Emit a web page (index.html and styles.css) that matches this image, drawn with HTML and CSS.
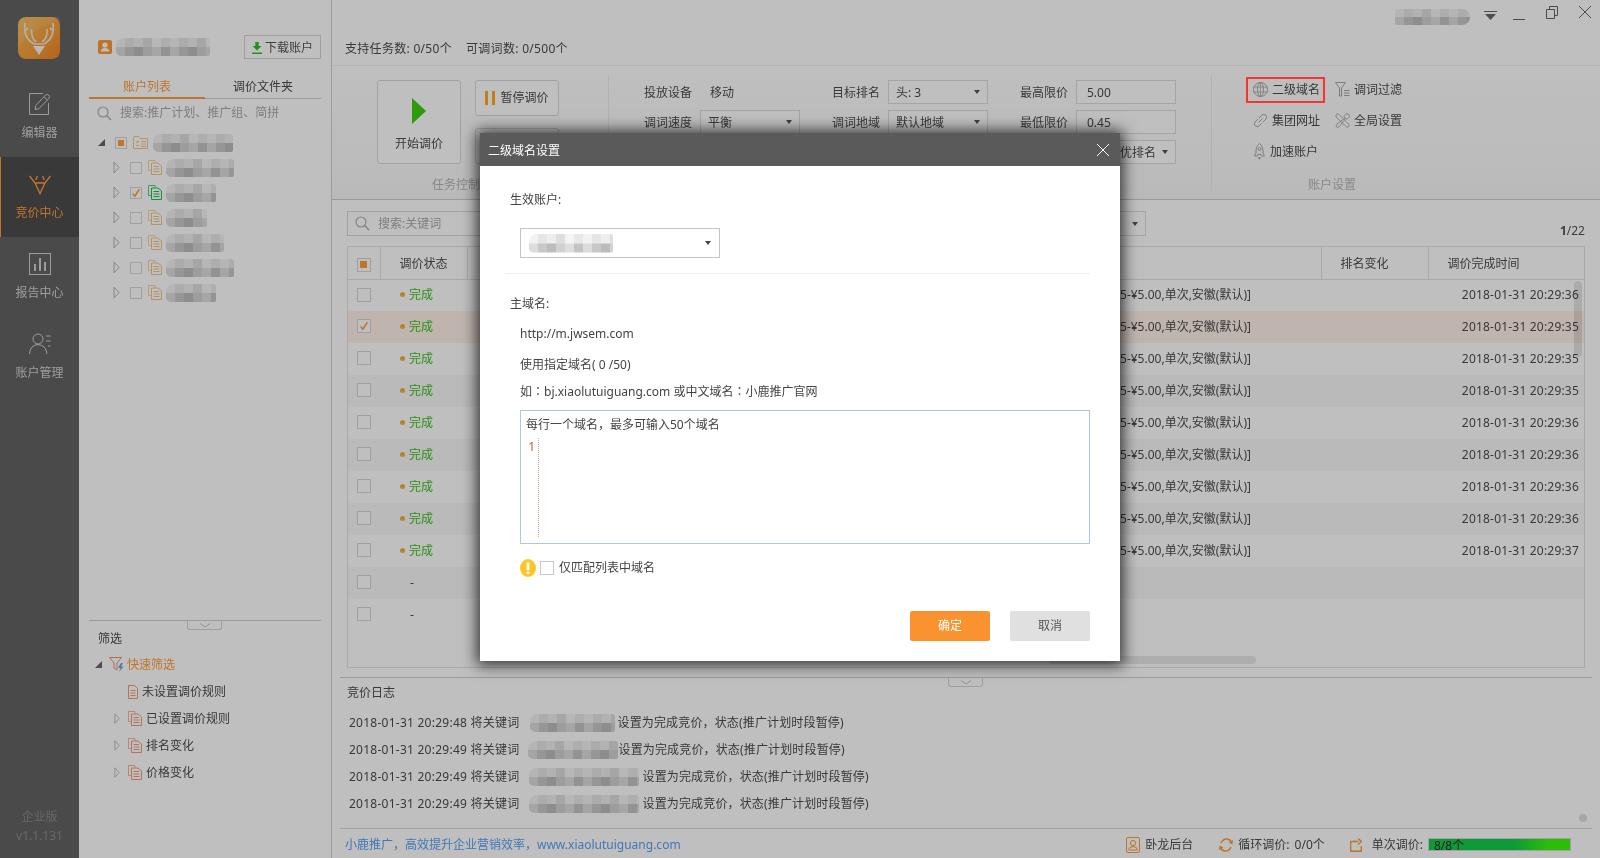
FILE: index.html
```html
<!DOCTYPE html>
<html lang="zh-CN">
<head>
<meta charset="utf-8">
<title>小鹿推广 - 竞价中心</title>
<link rel="stylesheet" href="styles.css">
</head>
<body>
<svg class="sprite" xmlns="http://www.w3.org/2000/svg">
  <symbol id="i-open" viewBox="0 0 7 13"><path d="M1 1 L6 6.5 L1 12 Z" fill="none" stroke="currentColor"/></symbol>
  <symbol id="i-corner" viewBox="0 0 8 8"><path d="M8 0 V8 H0 Z" fill="currentColor"/></symbol>
  <symbol id="i-docs" viewBox="0 0 14 15"><path d="M.5 .5 H7 V2.5 M.5 .5 V10.5 H3" fill="none" stroke="currentColor" opacity=".75"/><path d="M3.5 3 H10 L13.5 6 V14.5 H3.5 Z" fill="none" stroke="currentColor"/><path d="M5.5 6.5 H11 M5.5 9 H11.5 M5.5 11.5 H11.5" stroke="currentColor"/></symbol>
  <symbol id="i-doc" viewBox="0 0 10 14"><path d="M.5 .5 H6.5 L9.5 3.5 V13.5 H.5 Z" fill="none" stroke="currentColor"/><path d="M2.5 5.5 H7.5 M2.5 8 H7.5 M2.5 10.5 H7.5" stroke="currentColor"/></symbol>
  <symbol id="i-search" viewBox="0 0 15 15"><circle cx="6" cy="6" r="5" fill="none" stroke="currentColor" stroke-width="1.2"/><path d="M9.8 9.8 L14 14" stroke="currentColor" stroke-width="1.6"/></symbol>
  <symbol id="i-check" viewBox="0 0 12 12"><path d="M2 6.5 L4.6 9.8 L10 1.5" fill="none" stroke="currentColor" stroke-width="1.8"/></symbol>
</svg>

<div class="app">
  <aside class="rail">
    <svg class="logo" viewBox="0 0 42 42">
      <defs><linearGradient id="logo-g" x1="0" y1="0" x2="1" y2="1"><stop offset="0" stop-color="#f5bb52"/><stop offset=".55" stop-color="#f7a03c"/><stop offset="1" stop-color="#f38322"/></linearGradient></defs>
      <rect width="42" height="42" rx="8" fill="url(#logo-g)"/>
      <path d="M0 30 Q14 12 30 8 Q38 6 42 0 H8 Q0 0 0 8 Z" fill="#fff" opacity=".1"/>
      <path d="M7 6 Q5 21 16 27 M35 6 Q37 21 26 27 M13.5 12 Q13 21 18 25 M29 12 Q30 21 24 25 M16 27 H26 M6.5 14 L10 11 M35.5 14 L32 11" fill="none" stroke="#efe8dc" stroke-width="1.7"/>
      <path d="M15 29 H27 L21 38 Z" fill="#f8f5f0"/>
    </svg>
    <nav class="rail-nav">
      <a class="rail-item">
        <svg class="rail-icon" viewBox="0 0 22 22"><path d="M14 .5 H.5 V21.5 H19.5 V10" fill="none" stroke="currentColor"/><path d="M6 16.5 L6.8 12.5 L16.5 2 Q18 .6 19.8 2.2 Q21.2 3.8 20 5.3 L10 15.6 Z M15 3.8 L18.5 7" fill="none" stroke="currentColor"/></svg>
        <span>编辑器</span>
      </a>
      <a class="rail-item is-active">
        <svg class="rail-icon" viewBox="0 0 22 22"><path d="M.5 3 L6 10 H16 L21.5 3 M8.3 3 L6.8 7 M13.7 3 L15.2 7 M6 10 L11 20.5 L16 10" fill="none" stroke="currentColor" stroke-width="1.4"/></svg>
        <span>竞价中心</span>
      </a>
      <a class="rail-item">
        <svg class="rail-icon" viewBox="0 0 22 22"><rect x=".5" y=".5" width="21" height="21" fill="none" stroke="currentColor"/><path d="M6 11 V18 M11 5 V18 M16 9 V18" stroke="currentColor" stroke-width="2"/></svg>
        <span>报告中心</span>
      </a>
      <a class="rail-item">
        <svg class="rail-icon" viewBox="0 0 22 22"><circle cx="9" cy="6" r="5" fill="none" stroke="currentColor"/><path d="M.5 21 Q1 12 9 11.5 Q17 12 18 21" fill="none" stroke="currentColor"/><path d="M17 3 H21.5 M17 8 H21.5 M19 13 H21.5" stroke="currentColor"/></svg>
        <span>账户管理</span>
      </a>
    </nav>
    <div class="rail-version"><div>企业版</div><div>v1.1.131</div></div>
  </aside>

  <section class="accounts">
    <div class="acct-head">
      <svg class="acct-icon" viewBox="0 0 14 14"><rect width="14" height="14" rx="2" fill="#ff9a35"/><circle cx="7" cy="5" r="2.6" fill="#fff"/><path d="M2.5 11.5 Q3 8 7 8 Q11 8 11.5 11.5 Z" fill="#fff"/></svg>
      <span class="mosaic m-acct"></span>
      <button class="btn-download"><svg class="dl-icon" viewBox="0 0 10 12"><path d="M3.3 0 H6.7 V4 H9.5 L5 8.5 L.5 4 H3.3 Z M0 10.5 H10 V12 H0 Z" fill="#2cc22c"/></svg>下载账户</button>
    </div>
    <div class="tabs">
      <span class="tab is-active">账户列表</span>
      <span class="tab">调价文件夹</span>
    </div>
    <div class="acct-search">
      <svg class="search-icon"><use href="#i-search"/></svg>
      <span>搜索:推广计划、推广组、简拼</span>
    </div>
    <ul class="tree">
      <li class="tree-row root">
        <svg class="arrow-solid"><use href="#i-corner"/></svg>
        <span class="cb partial"></span>
        <svg class="folder" viewBox="0 0 15 13"><path d="M.5 2.5 V12.5 H14.5 V2.5 H7 L5.5 .5 H1 Z" fill="none" stroke="currentColor"/><circle cx="4.5" cy="6" r="1.2" fill="currentColor"/><path d="M2.5 10 Q4.5 7.5 6.5 10 Z" fill="currentColor"/><path d="M8 5.5 H13 M8 8 H13 M8 10.5 H13" stroke="currentColor"/></svg>
        <span class="mosaic m-root"></span>
      </li>
      <li class="tree-row"><svg class="arrow"><use href="#i-open"/></svg><span class="cb"></span><svg class="docs"><use href="#i-docs"/></svg><span class="mosaic m-t1"></span></li>
      <li class="tree-row"><svg class="arrow"><use href="#i-open"/></svg><span class="cb is-checked"><svg><use href="#i-check"/></svg></span><svg class="docs is-green"><use href="#i-docs"/></svg><span class="mosaic m-t2"></span></li>
      <li class="tree-row"><svg class="arrow"><use href="#i-open"/></svg><span class="cb"></span><svg class="docs"><use href="#i-docs"/></svg><span class="mosaic m-t3"></span></li>
      <li class="tree-row"><svg class="arrow"><use href="#i-open"/></svg><span class="cb"></span><svg class="docs"><use href="#i-docs"/></svg><span class="mosaic m-t4"></span></li>
      <li class="tree-row"><svg class="arrow"><use href="#i-open"/></svg><span class="cb"></span><svg class="docs"><use href="#i-docs"/></svg><span class="mosaic m-t1"></span></li>
      <li class="tree-row"><svg class="arrow"><use href="#i-open"/></svg><span class="cb"></span><svg class="docs"><use href="#i-docs"/></svg><span class="mosaic m-t2"></span></li>
    </ul>
    <div class="filter">
      <span class="handle handle-filter"><svg viewBox="0 0 12 5"><path d="M1 .5 L6 4 L11 .5" fill="none" stroke="currentColor"/></svg></span>
      <div class="filter-title">筛选</div>
      <div class="filter-row quick">
        <svg class="arrow-solid"><use href="#i-corner"/></svg>
        <svg class="funnel" viewBox="0 0 15 15"><path d="M.5 .5 H12.5 L8 6 V13 L5 11 V6 Z" fill="none" stroke="#ef8e6c"/><path d="M12 6 L9 11 H11.5 L10 15 L14.5 9.5 H12 L14 6 Z" fill="#6d9be6"/></svg>
        <span>快速筛选</span>
      </div>
      <div class="filter-row leaf"><svg class="doc"><use href="#i-doc"/></svg><span>未设置调价规则</span></div>
      <div class="filter-row branch"><svg class="arrow"><use href="#i-open"/></svg><svg class="docs"><use href="#i-docs"/></svg><span>已设置调价规则</span></div>
      <div class="filter-row branch"><svg class="arrow"><use href="#i-open"/></svg><svg class="docs"><use href="#i-docs"/></svg><span>排名变化</span></div>
      <div class="filter-row branch"><svg class="arrow"><use href="#i-open"/></svg><svg class="docs"><use href="#i-docs"/></svg><span>价格变化</span></div>
    </div>
  </section>

  <main class="main">
    <header class="topbar">
      <div class="winbar">
        <span class="mosaic m-win"></span>
        <svg class="win-drop" viewBox="0 0 13 24"><path d="M0 11.5 H13" stroke="currentColor"/><path d="M1 14 H12 L6.5 20 Z" fill="currentColor"/></svg>
        <svg class="win-min" viewBox="0 0 12 24"><path d="M0 19.5 H12" stroke="currentColor"/></svg>
        <svg class="win-max" viewBox="0 0 12 24"><path d="M.5 9.5 H8.5 V18.5 H.5 Z M3.5 9 V6.5 H11.5 V15.5 H9" fill="none" stroke="currentColor"/></svg>
        <svg class="win-close" viewBox="0 0 14 24"><path d="M1 6 L13 18 M13 6 L1 18" stroke="currentColor"/></svg>
      </div>
      <div class="stats"><span>支持任务数: 0/50个</span><span>可调词数: 0/500个</span></div>
    </header>

    <div class="toolbar">
      <div class="tool-group task">
        <div class="task-buttons">
          <button class="btn-start"><svg viewBox="0 0 14 26"><path d="M0 0 L14 13 L0 26 Z" fill="#3cd10f"/></svg><span>开始调价</span></button>
          <div class="task-side">
            <button class="btn-side"><svg viewBox="0 0 10 14"><path d="M0 0 H3 V14 H0 Z M7 0 H10 V14 H7 Z" fill="#ffa91f"/></svg><span>暂停调价</span></button>
            <button class="btn-side"></button>
          </div>
        </div>
        <div class="group-label task-label">任务控制</div>
      </div>

      <div class="tool-group params">
        <span class="p-label">投放设备</span><span class="p-value">移动</span>
        <span class="p-label">目标排名</span><span class="select">头: 3</span>
        <span class="p-label">最高限价</span><span class="field">5.00</span>
        <span class="p-label">调词速度</span><span class="select">平衡</span>
        <span class="p-label">调词地域</span><span class="select">默认地域</span>
        <span class="p-label">最低限价</span><span class="field">0.45</span>
        <span class="p-label"></span><span class="select"></span>
        <span class="p-label"></span><span class="select"></span>
        <span class="p-label"></span><span class="select">出价最优排名</span>
      </div>

      <div class="tool-group settings">
        <div class="settings-grid">
          <a class="set-item"><svg viewBox="0 0 15 15"><circle cx="7.5" cy="7.5" r="7" fill="none" stroke="currentColor"/><ellipse cx="7.5" cy="7.5" rx="3" ry="7" fill="none" stroke="currentColor"/><path d="M.5 5 H14.5 M.5 10 H14.5 M7.5 .5 V14.5" stroke="currentColor" stroke-width=".8"/></svg><span>二级域名</span></a>
          <a class="set-item"><svg viewBox="0 0 15 15"><path d="M.5 .5 H10.5 L6.5 6 V14 H4.5 V6 Z" fill="none" stroke="currentColor"/><path d="M9 8.5 H14.5 M9 11 H14.5 M9 13.5 H14.5" stroke="currentColor"/></svg><span>调词过滤</span></a>
          <a class="set-item"><svg viewBox="0 0 15 15"><path d="M6 5 L9 2 Q10.5 .5 12.8 2.2 Q14.5 4.5 13 6 L10 9 M9 10 L6 13 Q4.5 14.5 2.2 12.8 Q.5 10.5 2 9 L5 6 M5.5 9.5 L9.5 5.5" fill="none" stroke="currentColor"/></svg><span>集团网址</span></a>
          <a class="set-item"><svg viewBox="0 0 15 15"><path d="M1 1.5 L3 .5 L13.5 11 Q15 13.5 13 14 Q11.5 14.5 10.5 13 L1 4 Z M14 1.5 L11 .5 L9 3.5 L10 5 L2 11 Q.5 13 1.5 14 Q3 15 4.5 13.5 L10.5 5.5 L12 6 L14.5 4 Z" fill="none" stroke="currentColor" stroke-width=".9"/></svg><span>全局设置</span></a>
          <a class="set-item rocket"><svg viewBox="0 0 13 17"><path d="M6.5 .5 Q10.5 3.5 10 10 L11.5 13 H8.5 L8 11.5 H5 L4.5 13 H1.5 L3 10 Q2.5 3.5 6.5 .5 Z" fill="none" stroke="currentColor"/><circle cx="6.5" cy="6" r="1.5" fill="none" stroke="currentColor"/><path d="M5 15 H8 M6.5 14 V16.5" stroke="currentColor"/></svg><span>加速账户</span></a>
        </div>
        <div class="group-label settings-label">账户设置</div>
      </div>
    </div>

    <section class="results">
      <div class="results-head">
        <div class="table-search"><svg class="search-icon"><use href="#i-search"/></svg><span>搜索:关键词</span></div>
        <span class="select results-select"></span>
        <span class="pager"><b>1</b>/22</span>
      </div>
      <div class="table-wrap">
        <span class="scroll-v"></span>
        <span class="scroll-h"></span>
        <table class="grid">
          <colgroup><col class="c-check"><col class="c-status"><col class="c-rule"><col class="c-rank"><col class="c-time"></colgroup>
          <thead>
            <tr><th><span class="cb partial"></span></th><th>调价状态</th><th></th><th class="th-rank">排名变化</th><th class="th-time">调价完成时间</th></tr>
          </thead>
          <tbody>
            <tr><td><span class="cb"></span></td><td class="st"><i></i>完成</td><td class="rule">[移动,头:3,¥0.45-¥5.00,单次,安徽(默认)]</td><td></td><td class="time">2018-01-31 20:29:36</td></tr>
            <tr class="is-selected"><td><span class="cb is-checked"><svg><use href="#i-check"/></svg></span></td><td class="st"><i></i>完成</td><td class="rule">[移动,头:3,¥0.45-¥5.00,单次,安徽(默认)]</td><td></td><td class="time">2018-01-31 20:29:35</td></tr>
            <tr><td><span class="cb"></span></td><td class="st"><i></i>完成</td><td class="rule">[移动,头:3,¥0.45-¥5.00,单次,安徽(默认)]</td><td></td><td class="time">2018-01-31 20:29:35</td></tr>
            <tr class="is-striped"><td><span class="cb"></span></td><td class="st"><i></i>完成</td><td class="rule">[移动,头:3,¥0.45-¥5.00,单次,安徽(默认)]</td><td></td><td class="time">2018-01-31 20:29:35</td></tr>
            <tr><td><span class="cb"></span></td><td class="st"><i></i>完成</td><td class="rule">[移动,头:3,¥0.45-¥5.00,单次,安徽(默认)]</td><td></td><td class="time">2018-01-31 20:29:36</td></tr>
            <tr class="is-striped"><td><span class="cb"></span></td><td class="st"><i></i>完成</td><td class="rule">[移动,头:3,¥0.45-¥5.00,单次,安徽(默认)]</td><td></td><td class="time">2018-01-31 20:29:36</td></tr>
            <tr><td><span class="cb"></span></td><td class="st"><i></i>完成</td><td class="rule">[移动,头:3,¥0.45-¥5.00,单次,安徽(默认)]</td><td></td><td class="time">2018-01-31 20:29:36</td></tr>
            <tr class="is-striped"><td><span class="cb"></span></td><td class="st"><i></i>完成</td><td class="rule">[移动,头:3,¥0.45-¥5.00,单次,安徽(默认)]</td><td></td><td class="time">2018-01-31 20:29:36</td></tr>
            <tr><td><span class="cb"></span></td><td class="st"><i></i>完成</td><td class="rule">[移动,头:3,¥0.45-¥5.00,单次,安徽(默认)]</td><td></td><td class="time">2018-01-31 20:29:37</td></tr>
            <tr class="is-striped"><td><span class="cb"></span></td><td class="st-none">-</td><td></td><td></td><td></td></tr>
            <tr><td><span class="cb"></span></td><td class="st-none">-</td><td></td><td></td><td></td></tr>
          </tbody>
        </table>
      </div>
    </section>

    <section class="log">
      <span class="handle handle-log"><svg viewBox="0 0 12 5"><path d="M1 .5 L6 4 L11 .5" fill="none" stroke="currentColor"/></svg></span>
      <div class="log-title">竞价日志</div>
      <div class="log-row"><span class="log-stamp">2018-01-31 20:29:48 将关键词</span><span class="mosaic m-l1"></span><span>设置为完成竞价，状态(推广计划时段暂停)</span></div>
      <div class="log-row"><span class="log-stamp">2018-01-31 20:29:49 将关键词</span><span class="mosaic m-l2"></span><span>设置为完成竞价，状态(推广计划时段暂停)</span></div>
      <div class="log-row"><span class="log-stamp">2018-01-31 20:29:49 将关键词</span><span class="mosaic m-l3"></span><span>设置为完成竞价，状态(推广计划时段暂停)</span></div>
      <div class="log-row"><span class="log-stamp">2018-01-31 20:29:49 将关键词</span><span class="mosaic m-l3"></span><span>设置为完成竞价，状态(推广计划时段暂停)</span></div>
      <span class="corner-dot"></span>
    </section>

    <footer class="status">
      <a class="status-link">小鹿推广，高效提升企业营销效率，www.xiaolutuiguang.com</a>
      <div class="status-items">
        <svg class="st-icon" viewBox="0 0 14 16"><rect x=".5" y=".5" width="13" height="15" rx="1.5" fill="none" stroke="currentColor"/><circle cx="7" cy="6" r="2.6" fill="none" stroke="currentColor"/><path d="M2.5 13 Q3 9.5 7 9.5 Q11 9.5 11.5 13 Z" fill="none" stroke="currentColor"/></svg>
        <span class="st-a">卧龙后台</span>
        <svg class="st-icon st-gap" viewBox="0 0 14 16"><path d="M2 6 Q4 1.5 8.5 2 Q11 2.5 12.5 5 M12 10 Q10 14.5 5.5 14 Q3 13.5 1.5 11" fill="none" stroke="currentColor" stroke-width="1.5"/><path d="M14 3 L13.5 7.5 L9.5 5.5 Z M0 13 L.5 8.5 L4.5 10.5 Z" fill="currentColor"/></svg>
        <span class="st-a">循环调价:</span><span class="st-count">0/0个</span>
        <svg class="st-icon st-gap2" viewBox="0 0 12 14"><path d="M5 3.5 H.7 V13.3 H11.3 V8" fill="none" stroke="currentColor" stroke-width="1.4"/><path d="M3.5 3.5 H8.5 M8 .5 L11.5 3.5 L8 6.5" fill="none" stroke="currentColor" stroke-width="1.4"/></svg>
        <span class="st-b">单次调价:</span>
        <span class="progress">8/8个</span>
      </div>
    </footer>
  </main>
</div>

<div class="scrim"></div>

<div class="modal" role="dialog">
  <div class="modal-head">
    <span>二级域名设置</span>
    <svg class="modal-close" viewBox="0 0 14 14"><path d="M1 1 L13 13 M13 1 L1 13" stroke="#fff"/></svg>
  </div>
  <div class="modal-body">
    <div class="m-line">生效账户:</div>
    <div class="m-select"><span class="mosaic m-dlg"></span></div>
    <div class="m-divider"></div>
    <div class="m-line m-host">主域名:</div>
    <div class="m-line m-in m-url">http://m.jwsem.com</div>
    <div class="m-line m-in m-use">使用指定域名( 0 /50)</div>
    <div class="m-line m-in m-hint">如<span class="m-colon" lang="zh-TW">：</span>bj.xiaolutuiguang.com 或中文域名<span class="m-colon" lang="zh-TW">：</span>小鹿推广官网</div>
    <div class="m-editor">
      <div class="m-placeholder">每行一个域名，最多可输入50个域名</div>
      <div class="m-gutter">1</div>
    </div>
    <div class="m-check">
      <svg class="m-warn" viewBox="0 0 16 18"><ellipse cx="8" cy="9" rx="8" ry="9" fill="#fcc62d"/><path d="M6.7 3.5 H9.3 V11 H6.7 Z M6.7 12.5 H9.3 V15 H6.7 Z" fill="#fff"/></svg>
      <span class="m-cb"></span>
      <span>仅匹配列表中域名</span>
    </div>
    <div class="m-actions">
      <button class="m-btn m-ok">确定</button>
      <button class="m-btn m-cancel">取消</button>
    </div>
  </div>
</div>

<div class="callout"></div>
</body>
</html>
```

FILE: styles.css
```css
* { box-sizing: border-box; }
html, body { margin: 0; padding: 0; }
body {
  width: 1600px;
  height: 858px;
  overflow: hidden;
  position: relative;
  background: #fff;
  color: #4c4c4c;
  font: 12px/20px "Noto Sans", "Noto Sans CJK SC", sans-serif;
}
ul { list-style: none; margin: 0; padding: 0; }
button { font: inherit; color: inherit; background: #fff; padding: 0; cursor: default; }
svg { display: block; flex: none; }
.sprite { display: none; }

.app { display: flex; height: 858px; }

/* pixelated (censored) names */
.mosaic {
  display: block;
  flex: none;
  height: 18px;
  border-radius: 8px 3px 2px 5px;
  background:
    repeating-linear-gradient(90deg, #f2f2f2 0 9px, #e6e6e6 9px 18px, #eeeeee 18px 27px, #dedede 27px 36px, #f4f4f4 36px 45px, #e8e8e8 45px 54px) top / 100% 50% no-repeat,
    repeating-linear-gradient(90deg, #dcdcdc 0 9px, #c8c8c8 9px 18px, #bcbcbc 18px 27px, #d2d2d2 27px 36px, #dedede 36px 45px, #c4c4c4 45px 54px) bottom / 100% 50% no-repeat;
}
.m-acct { width: 94px; margin-left: 4px; }
.m-root { width: 80px; margin-left: 5px; }
.m-t1 { width: 68px; margin-left: 4px; }
.m-t2 { width: 50px; margin-left: 4px; }
.m-t3 { width: 41px; margin-left: 4px; }
.m-t4 { width: 58px; margin-left: 4px; }
.m-win { width: 75px; margin-right: 14px; margin-top: 9px; height: 16px; border-radius: 2px 8px 8px 2px; }
.m-l1 { width: 85px; margin: 0 3px 0 10px; }
.m-l2 { width: 90px; margin: 0 1px 0 8px; }
.m-l3 { width: 110px; margin: 0 4px 0 9px; }
.m-dlg { width: 84px; height: 19px; }

/* left rail */
.rail { width: 79px; flex: none; display: flex; flex-direction: column; background: #636363; color: #d2d2d2; }
.logo { width: 42px; height: 42px; margin: 17px 0 18px 18px; }
.rail-item { display: flex; flex-direction: column; align-items: center; height: 80px; padding-top: 16px; gap: 10px; line-height: 16px; color: #d2d2d2; }
.rail-icon { width: 22px; height: 22px; }
.rail-item.is-active { background: #4d4d4d; color: #ff9c3a; box-shadow: inset 1px 0 0 #ff9c3a; }
.rail-version { margin-top: auto; padding-bottom: 13px; text-align: center; color: #8c8c8c; line-height: 19px; }

/* accounts panel */
.accounts { width: 253px; flex: none; display: flex; flex-direction: column; padding: 35px 10px 0; border-right: 1px solid #cfcfcf; }
.acct-head { display: flex; align-items: center; height: 24px; padding-left: 9px; }
.acct-icon { width: 14px; height: 14px; }
.btn-download { display: flex; align-items: center; justify-content: center; width: 77px; height: 24px; margin-left: auto; padding-top: 2px; border: 1px solid #d6d6d6; color: #555; }
.dl-icon { width: 10px; height: 12px; margin-right: 3px; }
.tabs { display: flex; height: 24px; margin-top: 16px; border-bottom: 1px solid #cfcfcf; line-height: 23px; }
.tab { width: 116px; text-align: center; }
.tab.is-active { color: #ff9c3a; border-bottom: 2px solid #ff9c3a; height: 24px; }
.acct-search { display: flex; align-items: center; height: 24px; margin-top: 2px; padding-left: 8px; color: #aaa; }
.search-icon { width: 15px; height: 15px; margin-right: 8px; color: #b0b0b0; }
.tree { margin-top: 5px; }
.tree-row { display: flex; align-items: center; height: 25px; padding-left: 24px; }
.tree-row.root { padding-left: 9px; }
.arrow { width: 7px; height: 13px; color: #b4b4b4; margin-right: 10px; }
.arrow-solid { width: 7px; height: 7px; color: #666; margin-right: 10px; }
.cb { display: inline-flex; flex: none; align-items: center; justify-content: center; width: 12px; height: 12px; border: 1px solid #d6d6d6; background: #fff; vertical-align: middle; }
.cb.partial::after { content: ""; width: 6px; height: 6px; background: #ff9c3a; }
.cb.is-checked svg { width: 10px; height: 10px; color: #ff9c3a; }
.folder { width: 15px; height: 13px; margin-left: 6px; color: #f5c583; }
.docs { width: 14px; height: 15px; margin-left: 6px; color: #f5c583; }
.docs.is-green { color: #19c24e; }

.filter { position: relative; margin-top: auto; height: 238px; border-top: 1px solid #cfcfcf; }
.filter-title { padding: 8px 0 0 9px; height: 27px; margin-bottom: 3px; }
.filter-row { display: flex; align-items: center; height: 27px; }
.quick { padding-left: 6px; color: #ff9c3a; }
.quick .arrow-solid { margin-right: 7px; }
.funnel { width: 15px; height: 15px; margin-right: 3px; }
.leaf { padding-left: 39px; }
.doc { width: 10px; height: 14px; margin-right: 4px; color: #f09a7a; }
.branch { padding-left: 25px; }
.branch .arrow { width: 6px; margin-right: 8px; }
.branch .docs { margin: 0 4px 0 0; color: #f09a7a; }
.handle { position: absolute; display: flex; align-items: center; justify-content: center; width: 35px; height: 10px; border: 1px solid #d4d4d4; border-top-color: #cfcfcf; border-radius: 0 0 3px 3px; background: #fff; color: #c4c4c4; }
.handle svg { width: 12px; height: 5px; }
.handle-filter { left: 98px; top: -1px; }
.handle-log { left: 608px; top: -1px; }

/* main column */
.main { flex: 1; min-width: 0; display: flex; flex-direction: column; }
.topbar { height: 66px; flex: none; border-bottom: 1px solid #f0f0f0; }
.winbar { display: flex; justify-content: flex-end; height: 24px; padding-right: 8px; color: #666; }
.win-drop { width: 13px; height: 24px; margin-right: 16px; color: #6a6a6a; }
.win-min { width: 12px; height: 24px; margin-right: 21px; }
.win-max { width: 12px; height: 24px; margin-right: 20px; }
.win-close { width: 14px; height: 24px; }
.stats { display: flex; gap: 14px; padding: 15px 0 0 13px; color: #4c4c4c; letter-spacing: .3px; }

.toolbar { display: flex; height: 134px; flex: none; border-bottom: 1px solid #cfcfcf; background: linear-gradient(#fff, #f9f9f9); }
.tool-group { height: 116px; margin-top: 9px; }
.task { width: 277px; border-right: 1px solid #ececec; padding-top: 5px; }
.task-buttons { display: flex; gap: 14px; padding-left: 45px; height: 84px; }
.btn-start { display: flex; flex-direction: column; align-items: center; width: 84px; height: 84px; padding-top: 17px; border: 1px solid #d8d8d8; border-radius: 3px; }
.btn-start svg { width: 14px; height: 26px; margin-bottom: 10px; }
.task-side { display: flex; flex-direction: column; gap: 12px; }
.btn-side { display: flex; align-items: center; justify-content: center; gap: 5px; width: 84px; height: 36px; border: 1px solid #d8d8d8; border-radius: 3px; }
.btn-side svg { width: 10px; height: 14px; }
.group-label { color: #b6b6b6; line-height: 16px; }
.task-label { margin-top: 13px; padding-left: 100px; }

.params { display: grid; grid-template-columns: 91px 100px 88px 100px 88px 100px; grid-auto-rows: 24px; row-gap: 6px; align-content: start; width: 603px; padding-top: 5px; border-right: 1px solid #ececec; }
.p-label { text-align: right; padding-right: 8px; line-height: 26px; }
.p-value { padding-left: 10px; line-height: 26px; }
.select { display: flex; align-items: center; padding: 2px 7px 0; height: 24px; border: 1px solid #dcdcdc; background: #fff; }
.select::after { content: ""; margin-left: auto; margin-top: -2px; border: 3px solid transparent; border-top: 4px solid #555; border-bottom: 0; }
.field { height: 24px; padding-left: 10px; line-height: 24px; border: 1px solid #dcdcdc; background: #fff; }

.settings { padding: 1px 0 0 34px; }
.settings-grid { display: grid; grid-template-columns: 79px 80px; grid-auto-rows: 26px; gap: 5px 3px; }
.set-item { display: flex; align-items: center; padding-left: 7px; color: #4c4c4c; }
.set-item span { padding-top: 2px; }
.set-item svg { width: 15px; height: 15px; margin-right: 4px; color: #a8a8a8; }
.rocket svg { width: 13px; height: 17px; }
.settings-label { margin-top: 13px; padding-left: 62px; }

/* results table */
.results { flex: 1; min-height: 0; padding: 11px 15px 0; }
.results-head { display: flex; align-items: flex-end; height: 25px; }
.table-search { display: flex; align-items: center; width: 260px; height: 25px; padding-left: 7px; border: 1px solid #d8d8d8; color: #aaa; }
.table-search .search-icon { margin-right: 8px; }
.results-select { width: 146px; height: 25px; margin-left: 393px; }
.pager { margin-left: auto; margin-bottom: -3px; line-height: 16px; color: #555; }
.pager b { font-weight: 700; }
.table-wrap { position: relative; height: 422px; margin-top: 10px; border: 1px solid #e2e2e2; overflow: hidden; }
.grid { position: relative; width: 1236px; table-layout: fixed; border-collapse: collapse; }
.c-check { width: 32px; }
.c-status { width: 87px; }
.c-rule { width: 854px; }
.c-rank { width: 107px; }
.c-time { width: 156px; }
.grid th, .grid td { height: 32px; padding: 0; font-weight: 400; white-space: nowrap; overflow: hidden; line-height: 20px; }
.grid th { padding-top: 2px; border-bottom: 1px solid #e2e2e2; border-right: 1px solid #e2e2e2; text-align: center; }
.grid th:last-child { border-right: 0; }
.grid .th-time { text-align: left; padding-left: 19px; }
.grid .th-rank { text-align: left; padding-left: 19px; }
.grid td:first-child, .grid th:first-child { text-align: center; }
.grid .cb { width: 14px; height: 14px; }
.grid td .cb { margin-bottom: 3px; }
.grid th .cb.partial::after { width: 7px; height: 7px; }
.is-selected td { background: #fff1e8; }
.is-striped td { background: #f8f8f8; }
.st { padding-left: 20px !important; color: #37c41a; }
.st i { display: inline-block; width: 5px; height: 5px; margin-right: 4px; border-radius: 50%; background: #f3b13a; vertical-align: 2px; }
.st-none { padding-left: 30px !important; }
.rule { text-align: right; padding-right: 70px !important; }
.time { text-align: right; padding-right: 5px !important; letter-spacing: .2px; }
.scroll-v { position: absolute; left: 1226px; top: 34px; width: 8px; height: 76px; border-radius: 4px; background: #e4e4e4; z-index: 1; mix-blend-mode: multiply; }
.scroll-h { position: absolute; left: 700px; top: 409px; width: 208px; height: 8px; border-radius: 4px; background: #e8e8e8; }

/* log */
.log { position: relative; height: 151px; flex: none; margin: 0 8px; padding: 5px 0 0 7px; border-top: 1px solid #cfcfcf; }
.log-title { height: 20px; margin-bottom: 6px; }
.log-row { display: flex; align-items: center; height: 27px; padding-left: 2px; white-space: nowrap; letter-spacing: .15px; }
.log-stamp { letter-spacing: .25px; }
.corner-dot { position: absolute; right: 5px; top: 136px; width: 8px; height: 8px; border-radius: 50%; background: #dedede; }

/* status bar */
.status { display: flex; align-items: center; height: 30px; flex: none; margin: 0 8px; padding: 2px 21px 0 5px; border-top: 1px solid #d8d8d8; }
.status-link { color: #5aa0f5; }
.status-items { display: flex; align-items: center; margin-left: auto; white-space: nowrap; }
.st-icon { width: 14px; height: 16px; color: #ff9c3a; }
.st-a { margin-left: 5px; }
.st-gap { margin-left: 26px; }
.st-count { margin-left: 5px; }
.st-gap2 { width: 12px; margin-left: 25px; height: 14px; }
.st-b { margin: 0 5px 0 10px; }
.progress { width: 143px; height: 13px; padding-left: 5px; line-height: 13px; color: #2c2c2c; background: linear-gradient(90deg, #10cf4b 0, #10cf4b 60%, #3dfc0d 85%, #3dfc0d 100%); border: 1px solid #d8d8d8; }

/* modal layer */
.scrim { position: absolute; inset: 0; background: rgba(0, 0, 0, .25); }
.modal { position: absolute; left: 480px; top: 133px; width: 640px; height: 528px; background: #fff; color: #444; box-shadow: 0 1px 14px 3px rgba(0, 0, 0, .75); }
.modal-head { display: flex; align-items: center; justify-content: space-between; height: 33px; padding: 2px 10px 0 8px; background: #5a5a5a; color: #fff; }
.modal-close { width: 14px; height: 14px; margin-top: -2px; }
.modal-body { padding: 24px 30px 0; }
.m-line { height: 20px; }
.m-in { margin-left: 10px; }
.m-select { display: flex; align-items: center; position: relative; width: 200px; height: 30px; margin: 18px 0 0 10px; padding-left: 8px; border: 1px solid #c4c4c4; }
.m-select::after { content: ""; margin-left: auto; margin-right: 8px; border: 3px solid transparent; border-top: 4px solid #444; border-bottom: 0; }
.m-divider { height: 1px; margin: 15px 0 0 -5px; background: #eee; }
.m-host { margin-top: 20px; }
.m-url { margin-top: 10px; }
.m-use { margin-top: 11px; }
.m-hint { margin-top: 6px; }
.m-colon { font-family: "Noto Sans CJK TC", sans-serif; }
.m-editor { height: 134px; margin: 9px 0 0 10px; padding: 5px 0 0 5px; border: 1px solid #b0c7da; }
.m-placeholder { height: 18px; line-height: 18px; }
.m-gutter { width: 13px; height: 99px; margin-top: 4px; padding-right: 3px; text-align: right; line-height: 18px; color: #b5623a; border-right: 1px dotted #d4a58a; }
.m-check { display: flex; align-items: center; height: 20px; margin: 14px 0 0 10px; }
.m-warn { width: 16px; height: 18px; margin-right: 4px; }
.m-cb { width: 14px; height: 14px; margin-right: 5px; border: 1px solid #c8c8c8; }
.m-actions { display: flex; justify-content: flex-end; gap: 20px; margin-top: 33px; }
.m-btn { width: 80px; height: 30px; border: 0; border-radius: 2px; }
.m-ok { background: #fa9230; color: #fff; }
.m-cancel { background: #e0e0e0; color: #555; }

/* annotation drawn on top of the screenshot */
.callout { position: absolute; left: 1246px; top: 77px; width: 79px; height: 26px; border: 2px solid #f63434; }
```
